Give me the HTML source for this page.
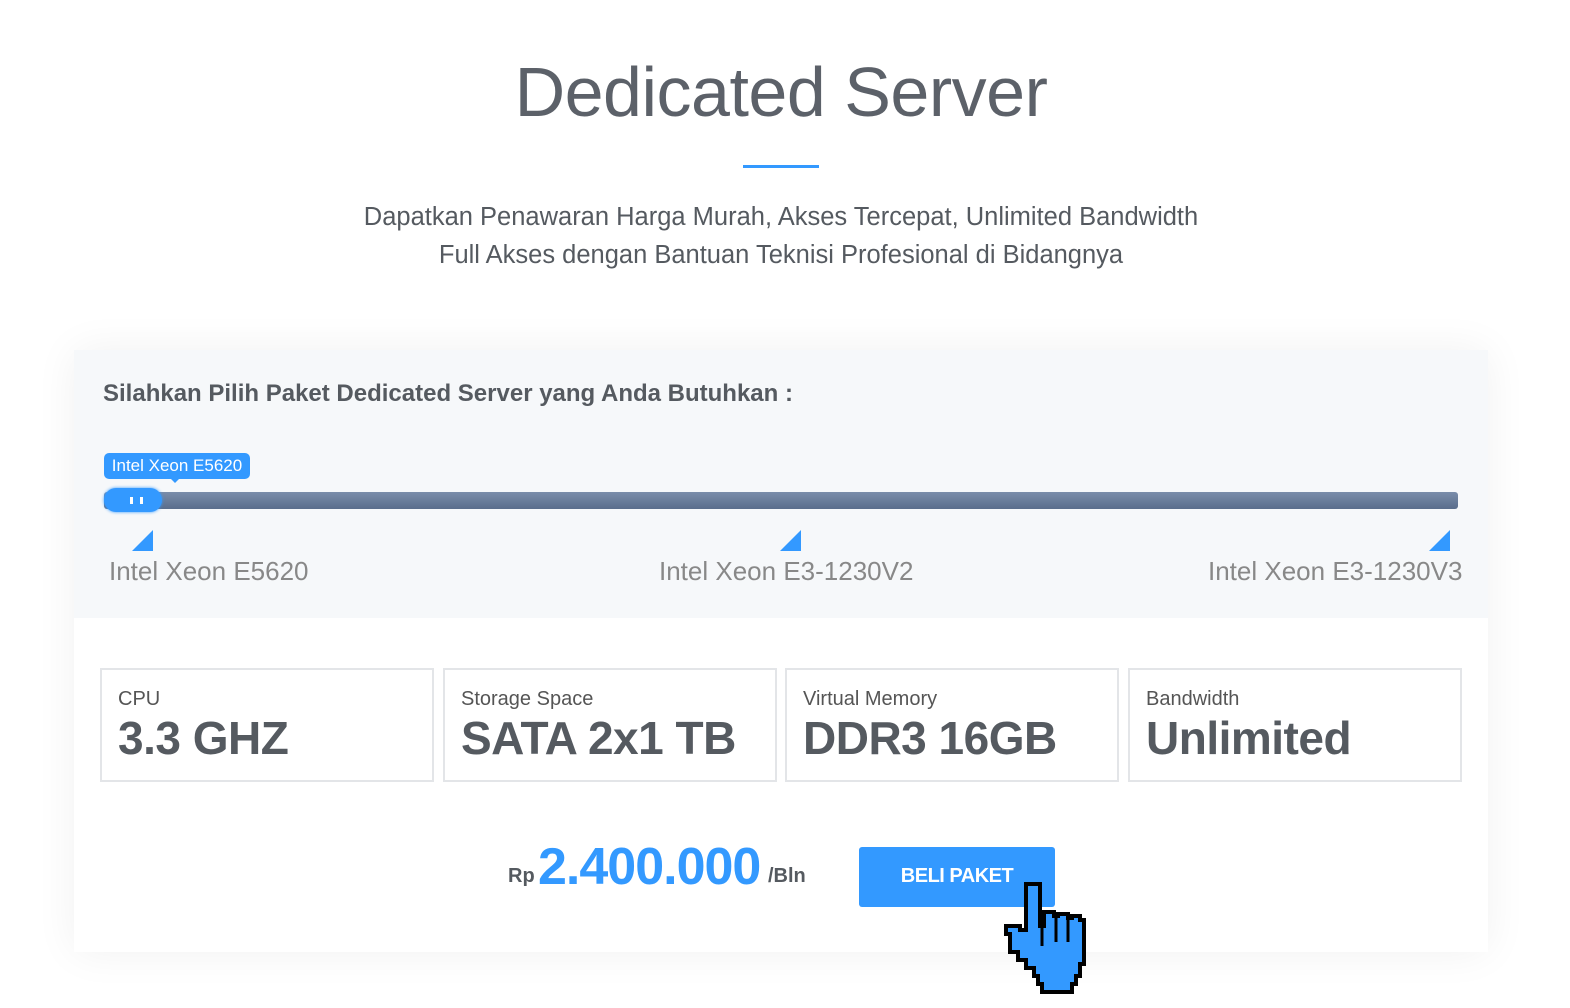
<!DOCTYPE html>
<html><head><meta charset="utf-8"><style>
body{margin:0;width:1570px;height:1008px;background:#fff;font-family:"Liberation Sans",sans-serif;position:relative;overflow:hidden}
.a{position:absolute}
h1{position:absolute;top:52px;left:0;width:1562px;text-align:center;margin:0;font-weight:normal;font-size:70px;color:#5c6169;letter-spacing:-0.5px}
.sub{left:0;width:1562px;text-align:center;font-size:25.5px;color:#555a60;line-height:38px;top:198px}
.card{left:74px;top:350px;width:1414px;height:602px;background:#fff;box-shadow:0 0 40px rgba(0,0,0,0.06)}
.top{left:0;top:0;width:1414px;height:268px;background:#f6f8fa}
.box{top:668px;height:110px;width:330px;border:2px solid #e3e5e8;background:#fff}
.box .l{position:absolute;left:16px;top:18px;font-size:20px;color:#555}
.box .v{position:absolute;left:16px;top:41px;font-size:46px;font-weight:bold;color:#555a60;letter-spacing:-0.5px}
.tick{width:0;height:0;border-left:21px solid transparent;border-bottom:21px solid #3399ff}
.tl{font-size:26px;color:#888;top:556px}
</style></head><body>
<h1>Dedicated Server</h1>
<div class="a" style="left:743px;top:165px;width:76px;height:3px;background:#3399ff"></div>
<div class="a sub">Dapatkan Penawaran Harga Murah, Akses Tercepat, Unlimited Bandwidth<br>Full Akses dengan Bantuan Teknisi Profesional di Bidangnya</div>
<div class="a card"><div class="a top"></div></div>
<div class="a" style="left:103px;top:380px;font-size:24px;font-weight:bold;color:#555a60">Silahkan Pilih Paket Dedicated Server yang Anda Butuhkan :</div>
<div class="a" style="left:104px;top:453px;width:146px;height:26px;background:#3399ff;border-radius:5px;color:#fff;font-size:17px;line-height:26px;text-align:center">Intel Xeon E5620</div>
<div class="a" style="left:170px;top:478px;width:0;height:0;border-left:5px solid transparent;border-right:5px solid transparent;border-top:5px solid #3399ff"></div>
<div class="a" style="left:104px;top:492px;width:1354px;height:17px;background:linear-gradient(#7a8daa,#5a6e8c);border-radius:3px"></div>
<div class="a" style="left:104px;top:488px;width:58px;height:24px;background:#3399ff;border-radius:12px;box-shadow:0 0 3px #3399ff"></div>
<div class="a" style="left:130px;top:497px;width:3px;height:7px;background:#fff"></div>
<div class="a" style="left:140px;top:497px;width:3px;height:7px;background:#fff"></div>
<div class="a tick" style="left:132px;top:530px"></div>
<div class="a tick" style="left:780px;top:530px"></div>
<div class="a tick" style="left:1429px;top:530px"></div>
<div class="a tl" style="left:109px">Intel Xeon E5620</div>
<div class="a tl" style="left:659px">Intel Xeon E3-1230V2</div>
<div class="a tl" style="left:1208px">Intel Xeon E3-1230V3</div>
<div class="a box" style="left:100px"><div class="l">CPU</div><div class="v">3.3 GHZ</div></div>
<div class="a box" style="left:443px"><div class="l">Storage Space</div><div class="v">SATA 2x1 TB</div></div>
<div class="a box" style="left:785px"><div class="l">Virtual Memory</div><div class="v">DDR3 16GB</div></div>
<div class="a box" style="left:1128px"><div class="l">Bandwidth</div><div class="v">Unlimited</div></div>
<div class="a" style="left:508px;top:865px;font-size:20px;font-weight:bold;color:#555a60">Rp</div>
<div class="a" style="left:538px;top:837px;font-size:52px;font-weight:bold;color:#3399ff;letter-spacing:-1px">2.400.000</div>
<div class="a" style="left:768px;top:865px;font-size:20px;font-weight:bold;color:#555a60">/Bln</div>
<div class="a" style="left:859px;top:847px;width:196px;height:60px;background:#3399ff;border-radius:3px;color:#fff;font-weight:bold;font-size:20px;line-height:58px;text-align:center;letter-spacing:-0.5px">BELI PAKET</div>
<svg class="a" style="left:1002px;top:880px" width="92" height="118" viewBox="0 0 92 118">
<path d="M28 4h10v42h4v-14h10v4h4v-2h10v4h4v-2h8v4h4v44h-4v12h-4v8h-4v8H40v-8h-4v-8h-4v-8h-8v-8h-8v-8h-8V54h-4v-8h14v4h6V4z" fill="#3399ff" stroke="#000" stroke-width="4" stroke-linejoin="miter"/>
<path d="M40 44v22M54 36v26M66 38v24" stroke="#000" stroke-width="3"/>
</svg>
</body></html>
